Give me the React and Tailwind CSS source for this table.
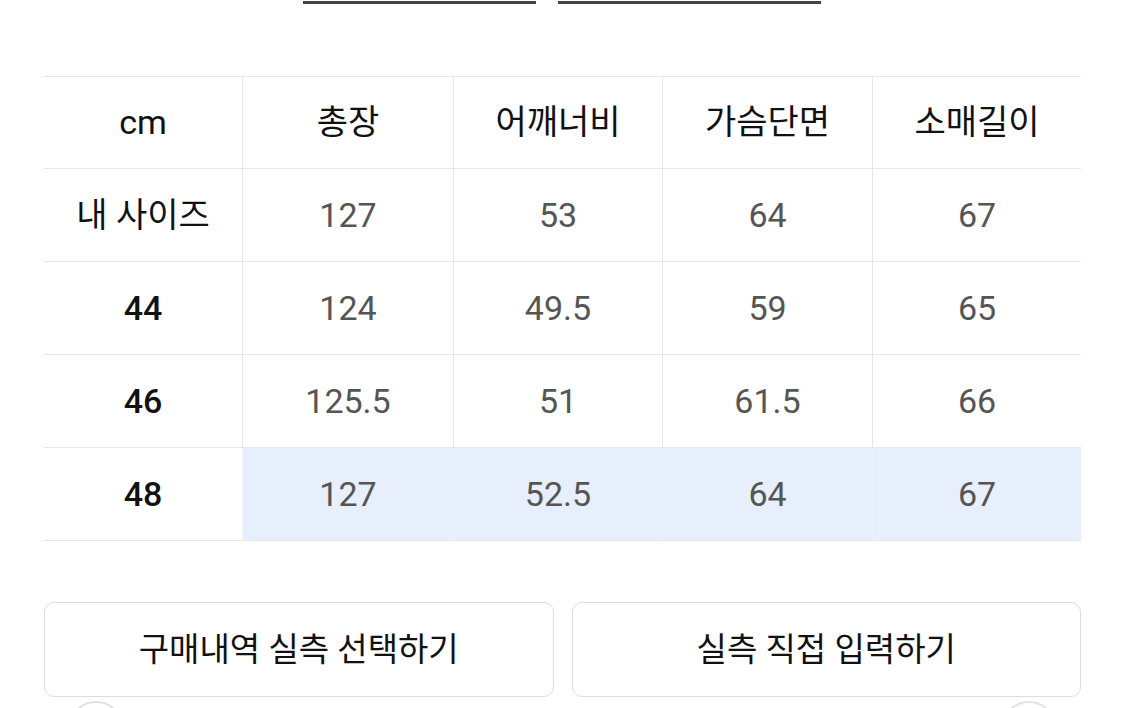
const columns = ['cm', '총장', '어깨너비', '가슴단면', '소매길이'];

const rows = [
    { label: '내 사이즈', values: ['127', '53', '64', '67'], bold: false },
    { label: '44', values: ['124', '49.5', '59', '65'], bold: true },
    { label: '46', values: ['125.5', '51', '61.5', '66'], bold: true },
    { label: '48', values: ['127', '52.5', '64', '67'], bold: true, selected: true },
];

const font = { fontFamily: 'Roboto, "Noto Sans CJK KR", sans-serif' };

export default function App() {
    return (
        <div className="w-[1125px] h-[708px] overflow-hidden bg-white text-[#111]" style={font}>
            {/* Tab underline stubs */}
            <div className="flex pl-[303px] gap-[22px] pt-[1px]">
                <div className="w-[233px] h-[3px] bg-[#444]" />
                <div className="w-[263px] h-[3px] bg-[#444]" />
            </div>

            {/* Size table */}
            <div className="ml-[44px] mt-[72px] w-[1037px] border-t border-[#e6e6e6]">
                <div className="grid grid-cols-[198px_211px_209px_210px_209px] h-[92px] border-b border-[#e6e6e6]">
                    {columns.map((c, i) => (
                        <div
                            key={c}
                            className={`flex items-center justify-center text-[34px] ${i > 0 ? 'border-l border-[#e6e6e6]' : ''}`}
                        >
                            {c}
                        </div>
                    ))}
                </div>
                {rows.map((r) => (
                    <div
                        key={r.label}
                        className="grid grid-cols-[198px_211px_209px_210px_209px] h-[93px] border-b border-[#e6e6e6]"
                    >
                        <div className={`flex items-center justify-center text-[34px] ${r.bold ? 'font-medium' : ''}`}>
                            {r.label}
                        </div>
                        {r.values.map((v, i) => (
                            <div
                                key={i}
                                className={`flex items-center justify-center text-[34px] text-[#555] border-l ${
                                    r.selected ? 'bg-[#e7eefc] border-[#eef2fa]' : 'border-[#e6e6e6]'
                                }`}
                            >
                                {v}
                            </div>
                        ))}
                    </div>
                ))}
            </div>

            {/* Actions */}
            <div className="ml-[44px] mt-[61px] w-[1037px] flex gap-[18px]">
                <button className="flex-1 h-[95px] rounded-[10px] border border-[#dedede] bg-white text-[33px] text-[#111]">
                    구매내역 실측 선택하기
                </button>
                <button className="flex-1 h-[95px] rounded-[10px] border border-[#dedede] bg-white text-[33px] text-[#111]">
                    실측 직접 입력하기
                </button>
            </div>

            {/* Swatches peeking below */}
            <div className="flex justify-between pl-[68px] pr-[68px] mt-[4px]">
                <div className="w-[56px] h-[56px] rounded-full border-2 border-[#e2e2e2]" />
                <div className="w-[56px] h-[56px] rounded-full border-2 border-[#e2e2e2]" />
            </div>
        </div>
    );
}
